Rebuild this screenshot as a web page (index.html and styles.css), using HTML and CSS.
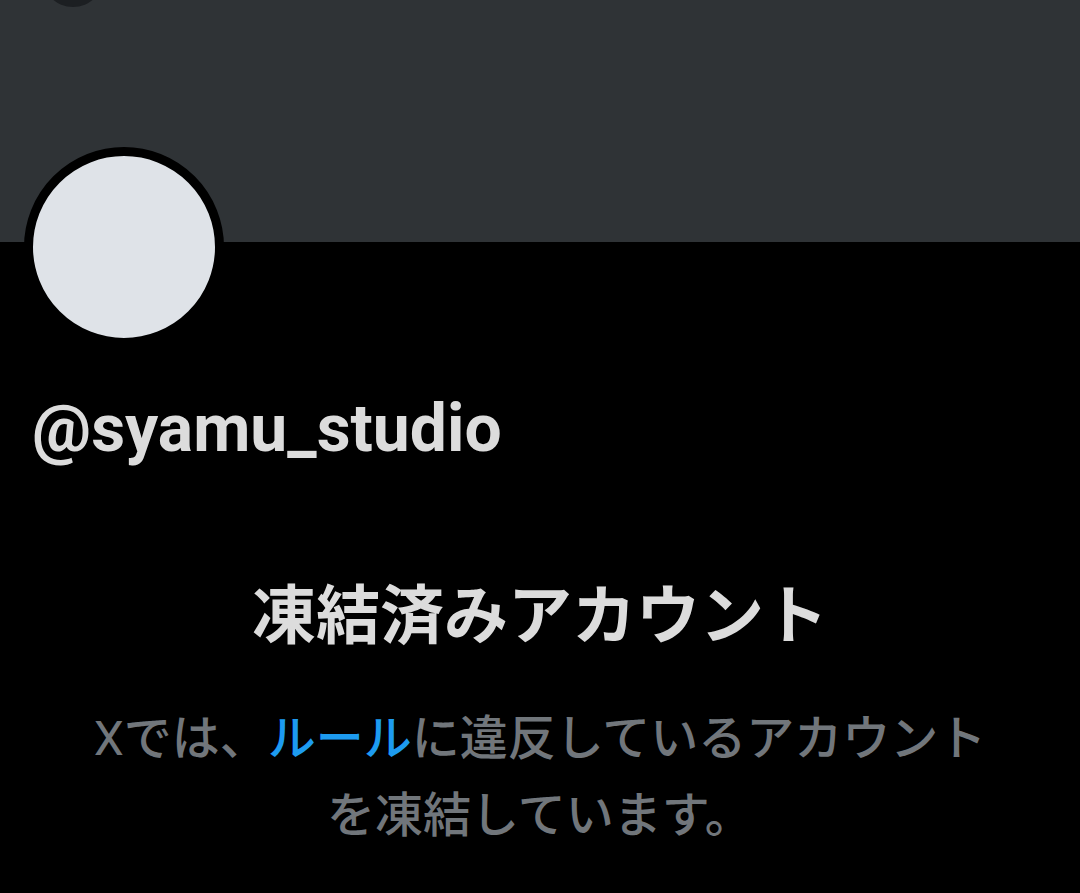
FILE: index.html
```html
<!DOCTYPE html>
<html lang="ja">
<head>
<meta charset="utf-8">
<link rel="stylesheet" href="styles.css">
</head>
<body>
<div class="page">
  <header class="banner">
    <div class="back-btn"></div>
  </header>
  <div class="profile">
    <div class="avatar"></div>
    <div class="handle">@syamu_studio</div>
  </div>
  <section class="notice">
    <h1 class="notice-title">凍結済みアカウント</h1>
    <p class="notice-text"><span class="brand">X</span>では、<span class="link">ルール</span>に違反しているアカウント<br>を凍結しています。</p>
  </section>
</div>
</body>
</html>
```
FILE: styles.css
```css
html, body {
  margin: 0;
  padding: 0;
  background: #000;
}
body {
  font-family: Roboto, "Noto Sans CJK JP", sans-serif;
  color: #e7e9ea;
  width: 1080px;
  height: 893px;
  overflow: hidden;
}
.page {
  display: flex;
  flex-direction: column;
}
.banner {
  position: relative;
  height: 242px;
  background: #2f3336;
}
.back-btn {
  position: absolute;
  left: 42px;
  top: -55px;
  width: 62px;
  height: 62px;
  border-radius: 50%;
  background: #1c1f22;
}
.profile {
  display: flex;
  flex-direction: column;
  padding-left: 24px;
}
.avatar {
  position: relative;
  z-index: 1;
  margin-top: -95px;
  width: 182px;
  height: 182px;
  border: 9px solid #000;
  border-radius: 50%;
  background: #dfe3e8;
}
.handle {
  margin-top: 44px;
  padding-left: 8px;
  font-size: 66px;
  font-weight: 700;
  line-height: 76px;
  color: #dcdcdc;
}
.notice {
  display: flex;
  flex-direction: column;
  align-items: center;
  text-align: center;
}
.notice-title {
  margin: 103px 0 0;
  font-family: "Noto Sans CJK JP", sans-serif;
  font-size: 64px;
  font-weight: 700;
  line-height: 80px;
  color: #dcdcdc;
}
.notice-text {
  margin: 50px 0 0;
  font-family: Roboto, "Noto Sans CJK JP", sans-serif;
  font-size: 48px;
  font-weight: 500;
  line-height: 77px;
  color: #71767b;
}
.brand {
  font-weight: 400;
}
.link {
  color: #1d9bf0;
}
```
